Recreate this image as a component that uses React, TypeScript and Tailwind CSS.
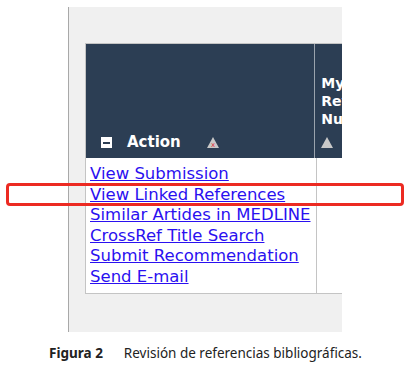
const links = [
  "View Submission",
  "View Linked References",
  "Similar Artides in MEDLINE",
  "CrossRef Title Search",
  "Submit Recommendation",
  "Send E-mail",
];

const WarnIcon = ({ mark }: { mark: boolean }) => (
  <svg width="12" height="11" viewBox="0 0 12 11">
    <polygon points="6,0 12,11 0,11" fill="#c8c8c8" />
    {mark && (
      <text x="6" y="10" fontSize="7" fill="#e0303a" textAnchor="middle" fontFamily="DejaVu Sans, sans-serif">
        x
      </text>
    )}
  </svg>
);

export default function App() {
  return (
    <div className="relative w-[411px] h-[368px] bg-white overflow-hidden">
      <div className="ml-[68px] mt-[7px] w-[274px] h-[325px] bg-[#f0f0f0] border-l border-[#a8a8a8] overflow-hidden pt-[36px] pl-[16px]">
        <div className="w-[300px] border border-[#c4c4c4] bg-white font-['DejaVu_Sans',sans-serif]">
          <div className="flex h-[114px] bg-[#2c3e54]">
            <div className="w-[231px] flex items-end pb-[6px] pl-[15px] border-r border-[#9aa3ad]">
              <span className="w-[11px] h-[11px] bg-white flex items-center justify-center mb-[4px]">
                <span className="w-[7px] h-[2px] bg-[#2c3e54]" />
              </span>
              <span className="ml-[15px] text-white font-bold text-[15px] leading-[20px]">Action</span>
              <span className="ml-[26px] mb-[4px]">
                <WarnIcon mark />
              </span>
            </div>
            <div className="flex-1 flex flex-col justify-end pl-[6px] pb-[10px] text-white font-bold text-[14px] leading-[18px]">
              <span>My</span>
              <span>Review</span>
              <span>Number</span>
              <span className="mt-[9px] flex">
                <WarnIcon mark={false} />
              </span>
            </div>
          </div>
          <div className="flex h-[135px]">
            <div className="w-[231px] border-r border-[#c4c4c4] pl-[4px] pt-[6px] flex flex-col">
              {links.map((l) => (
                <a key={l} href="#" className="text-[#2a10f0] underline text-[16.5px] leading-[20.6px] whitespace-nowrap">
                  {l}
                </a>
              ))}
            </div>
            <div className="flex-1" />
          </div>
        </div>
      </div>
      <div className="absolute left-[6px] top-[183px] w-[398px] h-[23px] border-[3px] border-[#ec2a22] rounded-[4px]" />
      <div className="mt-[11px] flex justify-center text-[13.5px] text-[#222] font-['Noto_Sans',sans-serif]">
        <span className="font-bold">Figura 2</span>
        <span className="ml-[21px]">Revisión de referencias bibliográficas.</span>
      </div>
    </div>
  );
}
